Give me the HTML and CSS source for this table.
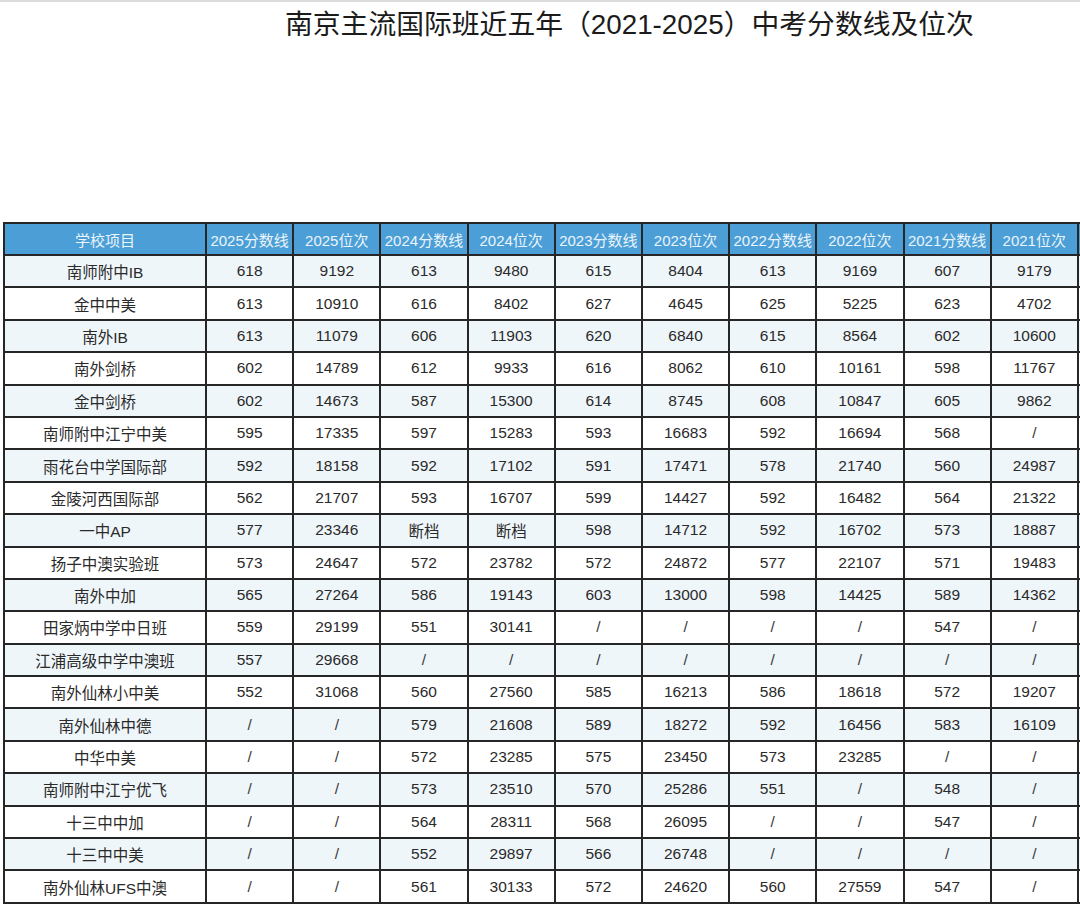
FILE: index.html
```html
<!DOCTYPE html>
<html lang="zh-CN">
<head>
<meta charset="utf-8">
<title>南京主流国际班近五年（2021-2025）中考分数线及位次</title>
<link rel="stylesheet" href="styles.css">
</head>
<body>
<div class="topband"></div>
<header class="title-row">
  <h1 class="title">南京主流国际班近五年（2021-2025）中考分数线及位次</h1>
</header>
<main class="sheet">
<table class="scores">
  <colgroup>
    <col class="c-name">
    <col class="c-num"><col class="c-num"><col class="c-num"><col class="c-num"><col class="c-num">
    <col class="c-num"><col class="c-num"><col class="c-num"><col class="c-num"><col class="c-num">
    <col class="c-extra">
  </colgroup>
  <thead>
    <tr>
      <th>学校项目</th>
      <th>2025分数线</th><th>2025位次</th>
      <th>2024分数线</th><th>2024位次</th>
      <th>2023分数线</th><th>2023位次</th>
      <th>2022分数线</th><th>2022位次</th>
      <th>2021分数线</th><th>2021位次</th>
      <th></th>
    </tr>
  </thead>
  <tbody>
    <tr class="alt"><td>南师附中IB</td><td>618</td><td>9192</td><td>613</td><td>9480</td><td>615</td><td>8404</td><td>613</td><td>9169</td><td>607</td><td>9179</td><td></td></tr>
    <tr><td>金中中美</td><td>613</td><td>10910</td><td>616</td><td>8402</td><td>627</td><td>4645</td><td>625</td><td>5225</td><td>623</td><td>4702</td><td></td></tr>
    <tr class="alt"><td>南外IB</td><td>613</td><td>11079</td><td>606</td><td>11903</td><td>620</td><td>6840</td><td>615</td><td>8564</td><td>602</td><td>10600</td><td></td></tr>
    <tr><td>南外剑桥</td><td>602</td><td>14789</td><td>612</td><td>9933</td><td>616</td><td>8062</td><td>610</td><td>10161</td><td>598</td><td>11767</td><td></td></tr>
    <tr class="alt"><td>金中剑桥</td><td>602</td><td>14673</td><td>587</td><td>15300</td><td>614</td><td>8745</td><td>608</td><td>10847</td><td>605</td><td>9862</td><td></td></tr>
    <tr><td>南师附中江宁中美</td><td>595</td><td>17335</td><td>597</td><td>15283</td><td>593</td><td>16683</td><td>592</td><td>16694</td><td>568</td><td class="na">/</td><td></td></tr>
    <tr class="alt"><td>雨花台中学国际部</td><td>592</td><td>18158</td><td>592</td><td>17102</td><td>591</td><td>17471</td><td>578</td><td>21740</td><td>560</td><td>24987</td><td></td></tr>
    <tr><td>金陵河西国际部</td><td>562</td><td>21707</td><td>593</td><td>16707</td><td>599</td><td>14427</td><td>592</td><td>16482</td><td>564</td><td>21322</td><td></td></tr>
    <tr class="alt"><td>一中AP</td><td>577</td><td>23346</td><td>断档</td><td>断档</td><td>598</td><td>14712</td><td>592</td><td>16702</td><td>573</td><td>18887</td><td></td></tr>
    <tr><td>扬子中澳实验班</td><td>573</td><td>24647</td><td>572</td><td>23782</td><td>572</td><td>24872</td><td>577</td><td>22107</td><td>571</td><td>19483</td><td></td></tr>
    <tr class="alt"><td>南外中加</td><td>565</td><td>27264</td><td>586</td><td>19143</td><td>603</td><td>13000</td><td>598</td><td>14425</td><td>589</td><td>14362</td><td></td></tr>
    <tr><td>田家炳中学中日班</td><td>559</td><td>29199</td><td>551</td><td>30141</td><td class="na">/</td><td class="na">/</td><td class="na">/</td><td class="na">/</td><td>547</td><td class="na">/</td><td></td></tr>
    <tr class="alt"><td>江浦高级中学中澳班</td><td>557</td><td>29668</td><td class="na">/</td><td class="na">/</td><td class="na">/</td><td class="na">/</td><td class="na">/</td><td class="na">/</td><td class="na">/</td><td class="na">/</td><td></td></tr>
    <tr><td>南外仙林小中美</td><td>552</td><td>31068</td><td>560</td><td>27560</td><td>585</td><td>16213</td><td>586</td><td>18618</td><td>572</td><td>19207</td><td></td></tr>
    <tr class="alt"><td>南外仙林中德</td><td class="na">/</td><td class="na">/</td><td>579</td><td>21608</td><td>589</td><td>18272</td><td>592</td><td>16456</td><td>583</td><td>16109</td><td></td></tr>
    <tr><td>中华中美</td><td class="na">/</td><td class="na">/</td><td>572</td><td>23285</td><td>575</td><td>23450</td><td>573</td><td>23285</td><td class="na">/</td><td class="na">/</td><td></td></tr>
    <tr class="alt"><td>南师附中江宁优飞</td><td class="na">/</td><td class="na">/</td><td>573</td><td>23510</td><td>570</td><td>25286</td><td>551</td><td class="na">/</td><td>548</td><td class="na">/</td><td></td></tr>
    <tr><td>十三中中加</td><td class="na">/</td><td class="na">/</td><td>564</td><td>28311</td><td>568</td><td>26095</td><td class="na">/</td><td class="na">/</td><td>547</td><td class="na">/</td><td></td></tr>
    <tr class="alt"><td>十三中中美</td><td class="na">/</td><td class="na">/</td><td>552</td><td>29897</td><td>566</td><td>26748</td><td class="na">/</td><td class="na">/</td><td class="na">/</td><td class="na">/</td><td></td></tr>
    <tr><td>南外仙林UFS中澳</td><td class="na">/</td><td class="na">/</td><td>561</td><td>30133</td><td>572</td><td>24620</td><td>560</td><td>27559</td><td>547</td><td class="na">/</td><td></td></tr>
  </tbody>
</table>
</main>
</body>
</html>
```

FILE: styles.css
```css
html, body {
  margin: 0;
  padding: 0;
  background: #ffffff;
}

body {
  width: 1080px;
  height: 907px;
  overflow: hidden;
  font-family: "Liberation Sans", "Noto Sans CJK SC", sans-serif;
  color: #2c2c2c;
}

.topband {
  height: 2px;
  background: #dcdcdc;
}

.title-row {
  padding: 8px 0 0 285px;
}

.title {
  margin: 0;
  font-family: "Liberation Sans", "Noto Sans CJK SC", sans-serif;
  font-size: 27.8px;
  font-weight: normal;
  line-height: 30px;
  color: #1b1b1b;
  white-space: nowrap;
}

.sheet {
  margin-top: 182px;
  width: 1080px;
  overflow: hidden;
}

.scores {
  margin-left: 3px;
  border-collapse: collapse;
  table-layout: fixed;
  width: 1137px;
}

.c-name { width: 202px; }
.c-num { width: 87.2px; }
.c-extra { width: 63px; }

.scores th,
.scores td {
  border: 2px solid #262626;
  padding: 0;
  text-align: center;
  vertical-align: middle;
  white-space: nowrap;
  overflow: hidden;
}

.scores th {
  height: 30px;
  background: #4c9fd6;
  color: #eaf4fb;
  font-size: 15px;
  font-weight: normal;
}

.scores td {
  height: 30.4px;
  font-size: 15.5px;
  color: #2a2a2a;
  background: #ffffff;
}

.scores tr.alt td {
  background: #eff6fa;
}

.scores td.na {
  color: #3a3a3a;
}
```
